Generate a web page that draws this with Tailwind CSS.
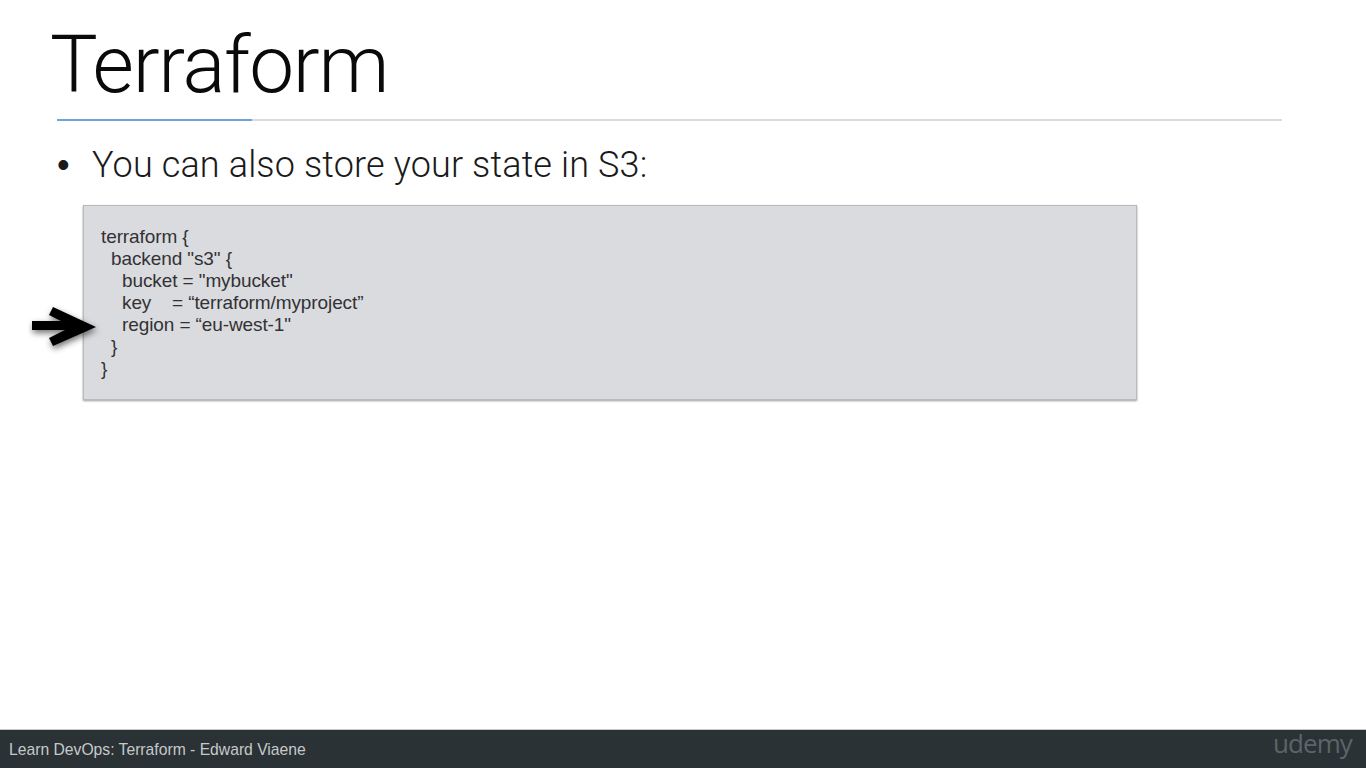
<!DOCTYPE html>
<html lang="en">
<head>
  <meta charset="UTF-8" />
  <title>Terraform</title>
  <script src="https://cdn.jsdelivr.net/npm/@tailwindcss/browser@4"></script>
</head>
<body class="bg-white text-black font-['Liberation_Sans',sans-serif] overflow-hidden">
  <div class="relative flex flex-col w-[1366px] h-[768px]">

    <!-- TITLE -->
    <h1 class="pl-[50px] pt-[19px] h-[119px] font-['Roboto',sans-serif] font-light text-[80px] leading-[92px] tracking-[-1.3px] text-[#0a0a0a]">Terraform</h1>

    <!-- RULE -->
    <div class="ml-[57px] w-[1225px] h-[2px] bg-[#dcdcdc] flex">
      <div class="w-[195px] bg-[#6fa3dc]"></div>
    </div>

    <!-- BULLET -->
    <div class="flex items-center pl-[57px] mt-[22px] h-[44px] font-['Roboto',sans-serif] font-light text-[36px] tracking-[0.14px] text-[#1a1a1a]">
      <span class="w-[35px] font-['Liberation_Sans',sans-serif]">•</span>
      <span>You can also store your state in S3:</span>
    </div>

    <!-- CODE -->
    <div class="ml-[83px] mt-[18px] w-[1054px] h-[195px] bg-[#dadbdf] border border-[#b9babd] shadow-[0_1px_2px_rgba(0,0,0,0.4)] pl-[17px] pt-[20px] text-[19px] leading-[22px] text-[#323234] tracking-[-0.1px]">
      <div class="whitespace-pre">terraform {</div>
      <div class="whitespace-pre pl-[10px]">backend "s3" {</div>
      <div class="whitespace-pre pl-[21px]">bucket = "mybucket"</div>
      <div class="whitespace-pre pl-[21px]">key    = “terraform/myproject”</div>
      <div class="whitespace-pre pl-[21px]">region = “eu-west-1"</div>
      <div class="whitespace-pre pl-[10px]">}</div>
      <div class="whitespace-pre">}</div>
    </div>

    <!-- ARROW -->
    <svg class="absolute left-[28px] top-[302px] w-[76px] h-[52px]" viewBox="0 0 76 52">
      <g class="drop-shadow-[1px_3px_3px_rgba(0,0,0,0.55)]">
        <path d="M4 19H50V28H4Z" fill="#000" />
        <path d="M25 5L68 25L25 44L21 36L44 24.500L21 13Z" fill="#000" />
      </g>
    </svg>

    <!-- FOOTER -->
    <div class="mt-auto h-[39px] bg-[#2a3235] border-t border-[#c8c8c8] flex items-center justify-between pl-[9px] pr-[14px]">
      <span class="text-[15.7px] text-[#c6c9ca] mt-[1px]">Learn DevOps: Terraform - Edward Viaene</span>
      <span class="font-['Open_Sans',sans-serif] text-[26px] leading-none tracking-[-0.9px] text-[#5c6568] -mt-[13px]">udemy</span>
    </div>
  </div>
</body>
</html>
